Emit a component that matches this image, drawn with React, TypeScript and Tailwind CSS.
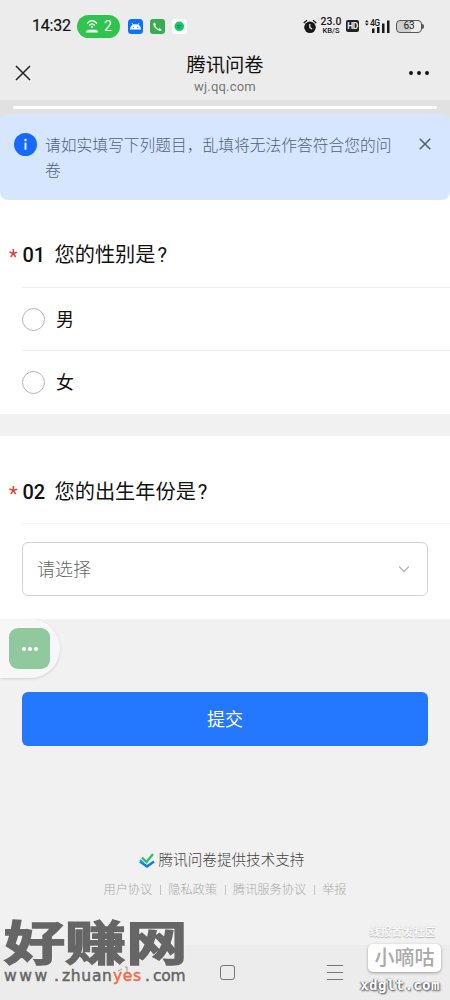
import { useState } from 'react';

const OPTIONS = ['男', '女'];
const LINKS = ['用户协议', '隐私政策', '腾讯服务协议', '举报'];

function CloseIcon({ className }: { className: string }) {
  return (
    <svg viewBox="0 0 16 16" className={className} fill="none" stroke="currentColor">
      <path d="M1 1l14 14M15 1L1 15" />
    </svg>
  );
}

function StatusBar() {
  return (
    <div className="flex h-[50px] items-center pt-[2px] pr-[26px] pl-[32px]">
      <span className="w-[39px] text-[16px] leading-none tracking-[-0.2px] whitespace-nowrap text-[#111] [-webkit-text-stroke:0.2px_#111]">14:32</span>
      <div className="ml-[6px] flex h-[23px] w-[43px] items-center rounded-full bg-[#2fc34f] pl-[8px] text-white">
        <svg viewBox="0 0 14 14" className="h-[14px] w-[14px]" fill="none" stroke="currentColor">
          <path d="M2 4.5Q7-1.3 12 4.5" strokeWidth="1.3" />
          <path d="M4.3 6.5Q7 3.2 9.7 6.5" strokeWidth="1.2" />
          <circle cx="7" cy="7.8" r="1" fill="currentColor" stroke="none" />
          <path d="M1 13.5Q1 10.8 4 10.8H10Q13 10.8 13 13.5Z" fill="currentColor" stroke="none" />
        </svg>
        <span className="ml-[5px] text-[14px] leading-none">2</span>
      </div>
      <svg viewBox="0 0 15 15" className="ml-[8px] h-[15px] w-[15px]">
        <rect width="15" height="15" rx="3.5" fill="#0b73f5" />
        <path d="M2 10.5Q2.3 5.3 7.5 5.3Q12.7 5.3 13 10.5Z" fill="#fff" />
        <path d="M4 4l1.4 2M11 4l-1.4 2" stroke="#fff" strokeWidth=".8" />
        <circle cx="5.2" cy="8.3" r=".6" fill="#0b73f5" />
        <circle cx="9.8" cy="8.3" r=".6" fill="#0b73f5" />
      </svg>
      <svg viewBox="0 0 15 15" className="ml-[7px] h-[15px] w-[15px]">
        <rect width="15" height="15" rx="3" fill="#3aac50" />
        <path d="M4.2 3.2C2.5 4.3 3.4 7.2 5.4 9.3C7.6 11.6 10.5 12.6 11.8 10.9L9.7 9L8.4 9.9C7.3 9.4 6 8 5.3 6.7L6.2 5.4Z" fill="#e6ffe9" />
      </svg>
      <svg viewBox="0 0 15 15" className="ml-[7px] h-[15px] w-[15px]">
        <rect width="15" height="15" rx="3" fill="#fbfffc" />
        <circle cx="7.3" cy="7.3" r="4.8" fill="#17c76a" />
        <path d="M4.8 6.5H9.8M5.5 8.4H8.6" stroke="#087b3a" strokeWidth=".9" />
      </svg>

      <div className="ml-auto flex items-center text-[#181818]">
        <svg viewBox="0 0 14 15" className="h-[15px] w-[14px]">
          <circle cx="7" cy="8.3" r="5.8" fill="currentColor" />
          <path d="M.7 4L4 1.2M13.3 4L10 1.2" stroke="currentColor" strokeWidth="1.3" />
          <path d="M6.8 5V8.6L9.2 10" fill="none" stroke="#eee" strokeWidth="1.2" />
        </svg>
        <div className="ml-[4px] flex w-[20px] flex-col items-center font-medium whitespace-nowrap">
          <span className="text-[10.5px] leading-[8px]">23.0</span>
          <span className="mt-[1px] text-[7.5px] leading-[7px]">KB/S</span>
        </div>
        <span className="ml-[5px] flex h-[12px] w-[13px] items-center justify-center rounded-[2px] bg-[#222] text-[8.5px] font-bold tracking-[-0.4px] text-[#eee]">HD</span>
        <div className="relative ml-[6px] h-[14px] w-[25px]">
          <svg viewBox="0 0 25 14" className="h-[14px] w-[25px]" fill="currentColor">
            <path d="M0 3.2L1.8 1L3.6 3.2ZM0 4.6H3.6L1.8 6.8Z" />
            <path d="M7 9.5h2.5V14H7zM12 8h2.5v6H12zM17 4.5h2.5V14H17zM22 1.5h2.500V14H22z" />
          </svg>
          <span className="absolute top-0 left-[5px] text-[8.5px] leading-[8px] font-medium tracking-[-0.5px]">4G</span>
        </div>
        <div className="ml-[6px] flex items-center">
          <span className="flex h-[13px] w-[26px] items-center justify-center rounded-[4px] border border-[#555] bg-linear-to-r from-[#cfcfcf] from-60% to-[#ececec] to-60% text-[10px] leading-none">63</span>
          <span className="h-[5px] w-[2px] rounded-r-sm bg-[#555]" />
        </div>
      </div>
    </div>
  );
}

function Header() {
  return (
    <div className="flex h-[50px] items-start justify-between px-[15px]">
      <CloseIcon className="mt-[15px] h-[16px] w-[16px] stroke-[1.5] text-[#222]" />
      <div className="flex flex-col items-center pl-[10px]">
        <h1 className="mt-[4px] text-[19.3px] leading-[24px] whitespace-nowrap text-[#111]">腾讯问卷</h1>
        <span className="text-[13px] leading-[17px] tracking-[0.2px] text-[#777]">wj.qq.com</span>
      </div>
      <div className="mt-[21px] mr-[6px] flex gap-[4px]">
        <i className="h-[4px] w-[4px] rounded-full bg-[#151515]" />
        <i className="h-[4px] w-[4px] rounded-full bg-[#151515]" />
        <i className="h-[4px] w-[4px] rounded-full bg-[#151515]" />
      </div>
    </div>
  );
}

function QuestionTitle({ num, text }: { num: string; text: string }) {
  return (
    <h2 className="flex items-center pl-[9px] whitespace-nowrap text-[#111]">
      <span className="w-[13.5px] pt-[3px] text-[20px] leading-[24px] text-[#e03c36]">*</span>
      <span className="w-[32px] text-[20px] leading-[28px] font-medium">{num}</span>
      <span className="text-[20.2px] leading-[28px]">
        {text}
        <span className="ml-[2px]">?</span>
      </span>
    </h2>
  );
}

// Site marks laid over the bottom corners of the screen
function LeftMark() {
  return (
    <div className="absolute top-[920px] left-[4px] h-[70px] w-[184px] text-[#666]">
      <div className="w-[141px] origin-left scale-x-[1.3] text-[47px] leading-[48px] font-bold whitespace-nowrap [-webkit-text-stroke:1.5px_#666] [text-shadow:0_0_2px_#fff,0_0_2px_#fff]">
        好赚网
      </div>
      <div className="flex w-[183px] items-center font-['DejaVu_Sans',sans-serif] text-[15.5px] leading-[17px] [-webkit-text-stroke:0.5px] [text-shadow:0_0_2px_#fff]">
        <span className="w-[50px] tracking-[2.6px]">www</span>
        <span className="w-[8px]">.</span>
        <span className="w-[51px] tracking-[0.7px]">zhuan</span>
        <span className="w-[32px] tracking-[0.7px] text-[#ee6b48]">yes</span>
        <span className="w-[8px]">.</span>
        <span className="tracking-[-0.2px]">com</span>
      </div>
    </div>
  );
}

function RightMark() {
  return (
    <div className="absolute top-[925px] left-[358px] flex w-[84px] flex-col items-center whitespace-nowrap">
      <span className="ml-[5px] text-[11px] leading-[15px] font-bold text-[#f8f8f8] [text-shadow:0_1px_1px_#bbb,0_0_1px_#ccc]">线报首发社区</span>
      <span className="mt-[4px] ml-[9px] flex h-[28px] w-[73px] items-center justify-center rounded-[5px] bg-white text-[20px] font-medium text-[#aaa] shadow-[0_1px_3px_#999]">小嘀咕</span>
      <span className="mt-[4px] font-['DejaVu_Sans_Mono',monospace] text-[14px] leading-[18px] font-bold tracking-[0.4px] text-white [text-shadow:1px_1px_2px_#444,-1px_0_1px_#666]">xdglt.com</span>
    </div>
  );
}

export default function App() {
  const [picked, setPicked] = useState<string | null>(null);
  const [noticeOpen, setNoticeOpen] = useState(true);

  return (
    <main className="relative h-[1000px] w-[450px] overflow-hidden bg-[#f1f1f1] font-['Roboto','Noto_Sans_CJK_SC',sans-serif]">
      <header className="bg-[#ececec]">
        <StatusBar />
        <Header />
      </header>
      <div className="h-[14px] bg-[#e1e1e1] px-[13px] pt-[6px]">
        <div className="h-[3px] rounded-full bg-white" />
      </div>

      {noticeOpen && (
        <div className="bg-linear-to-b from-[#e1e1e1] from-50% to-white to-50%">
          <div className="flex h-[86px] items-start rounded-[8px] bg-[#d6e6ff] pt-[19px] pl-[14px]">
            <svg viewBox="0 0 24 24" className="h-[23px] w-[23px] shrink-0">
              <circle cx="12" cy="12" r="12" fill="#1769fc" />
              <circle cx="12" cy="7.2" r="1.3" fill="#e8f2ff" />
              <path d="M12 10v7.5" stroke="#e8f2ff" strokeWidth="2" />
            </svg>
            <p className="ml-[8px] w-[350px] text-[15.75px] leading-[25px] font-light text-[#50617b]">
              请如实填写下列题目，乱填将无法作答符合您的问卷
            </p>
            <button className="mt-[5px] ml-[24px]" onClick={() => setNoticeOpen(false)}>
              <CloseIcon className="h-[12px] w-[12px] stroke-2 text-[#4d5d76]" />
            </button>
          </div>
        </div>
      )}

      <section className="h-[214px] bg-white pt-[41px]">
        <QuestionTitle num="01" text="您的性别是" />
        <div className="mt-[18px] ml-[22px]">
          {OPTIONS.map((opt) => (
            <label key={opt} className="flex h-[63px] items-center border-t border-[#efefef]">
              <input type="radio" name="gender" className="sr-only" onChange={() => setPicked(opt)} />
              <span className="flex h-[23px] w-[23px] items-center justify-center rounded-full border border-[#b5b5b5]">
                {picked === opt && <i className="h-3 w-3 rounded-full bg-[#2478ff]" />}
              </span>
              <span className="ml-[11px] pt-[1px] text-[18px] leading-[24px] text-[#111]">{opt}</span>
            </label>
          ))}
        </div>
      </section>

      <section className="mt-[22px] h-[183px] bg-white pt-[42px]">
        <QuestionTitle num="02" text="您的出生年份是" />
        <div className="mt-[17px] ml-[22px] border-t border-[#f3f3f3] pt-[18px] pr-[22px]">
          <button className="flex h-[54px] w-full items-center justify-between rounded-[6px] border border-[#d2d2d2] pr-[17px] pl-[14px]">
            <span className="pt-[1px] text-[18px] font-light text-[#666]">请选择</span>
            <svg viewBox="0 0 12 8" className="h-[8px] w-[12px]" fill="none" stroke="#b5b5b5" strokeWidth="1.3">
              <path d="M1 1.5l5 5 5-5" />
            </svg>
          </button>
        </div>
      </section>

      <button className="mt-[73px] ml-[22px] flex h-[54px] w-[406px] items-center justify-center rounded-[6px] bg-[#2478ff] text-[18px] text-white">
        提交
      </button>

      <footer className="mt-[103px] flex flex-col items-center">
        <div className="flex items-center pt-[1px] pr-[7px]">
          <svg viewBox="0 0 16 16" className="h-[16px] w-[16px]" fill="none">
            <path d="M1 8.500l7 5L15 8.500" stroke="#1479e8" strokeWidth="2.5" />
            <path d="M1 7l3.500 3" stroke="#12a8df" strokeWidth="2" />
            <path d="M3 4.500l4.500 4.500L14 1" stroke="#30bf65" strokeWidth="2.3" />
          </svg>
          <span className="ml-[4px] text-[14.6px] leading-[21px] font-light text-[#444]">腾讯问卷提供技术支持</span>
        </div>
        <div className="mt-[10px] flex text-[12.2px] leading-[18px] font-light text-[#aaa]">
          {LINKS.map((link, i) => (
            <span key={link} className="flex items-center">
              {i > 0 && <i className="mx-[7.500px] h-[10px] w-px bg-[#c3c3c3]" />}
              {link}
            </span>
          ))}
        </div>
      </footer>

      <nav className="mt-[46px] flex h-[55px] items-center bg-[#ececec] pl-[117px]">
        <svg viewBox="0 0 12 14" className="h-[14px] w-[12px]" fill="none" stroke="#999">
          <path d="M1 5l4-2M8 1h2v6" />
        </svg>
        <span className="ml-[91px] h-[15px] w-[15px] rounded-[3px] border border-[#777]" />
        <div className="ml-[92px] flex w-[16px] flex-col gap-[6px]">
          <i className="h-px bg-[#777]" />
          <i className="h-px bg-[#777]" />
          <i className="h-px bg-[#777]" />
        </div>
      </nav>

      <div className="absolute top-[619px] left-0 flex h-[59px] w-[60px] items-center rounded-r-full bg-[#f7f7f7] pl-[9px] shadow-[0_1px_3px_#0002]">
        <div className="flex h-[41px] w-[41px] items-center justify-center gap-[2px] rounded-[9px] bg-[#8fc99d]">
          <i className="h-[4px] w-[4px] rounded-full bg-white" />
          <i className="h-[4px] w-[4px] rounded-full bg-white" />
          <i className="h-[4px] w-[4px] rounded-full bg-white" />
        </div>
      </div>

      <LeftMark />
      <RightMark />
    </main>
  );
}
